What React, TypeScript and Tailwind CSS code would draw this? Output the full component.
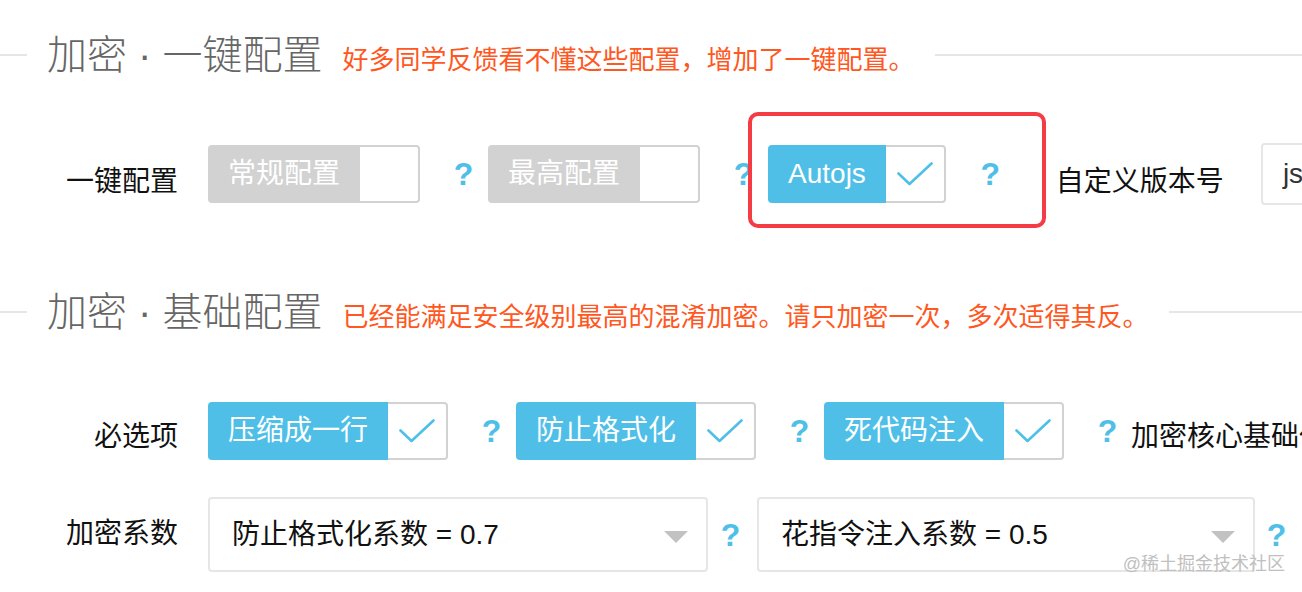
import React from "react";

const Check = () => (
  <svg width="36" height="24" viewBox="0 0 36 24" fill="none">
    <polyline points="1.5,11.5 12.5,22 34.5,1.5" stroke="#4fbfe8" strokeWidth="2.6" strokeLinecap="round" strokeLinejoin="round" />
  </svg>
);

function Box({ text, checked }: { text: string; checked: boolean }) {
  return (
    <div className="flex h-[58px] mt-[2px] shrink-0">
      <span
        className={
          checked
            ? "flex items-center px-[20px] rounded-l-[4px] bg-[#4fbfe8] text-white text-[28px] leading-none whitespace-nowrap"
            : "flex items-center px-[20px] rounded-l-[4px] bg-[#d2d2d2] text-white text-[28px] leading-none whitespace-nowrap"
        }
      >
        {text}
      </span>
      <span className="w-[60px] border-2 border-l-0 border-[#d2d2d2] rounded-r-[4px] bg-white flex items-center justify-center">
        {checked && <Check />}
      </span>
    </div>
  );
}

function Q({ h = "h-[58px] mt-[2px]", cls = "" }: { h?: string; cls?: string }) {
  return (
    <div className={`${h} ${cls} w-[17px] shrink-0 flex items-center justify-center text-[32px] font-bold leading-none text-[#4fbfe8]`}>
      ?
    </div>
  );
}

function Header({ title, sub, cls }: { title: string; sub: string; cls: string }) {
  return (
    <div className={`flex items-center h-[40px] ${cls}`}>
      <div className="w-[27px] h-[2px] bg-[#e6e6e6] shrink-0" />
      <div className="flex items-baseline px-[20px] shrink-0 whitespace-nowrap">
        <span className="text-[40px] leading-none text-[#666666] font-light">{title}</span>
        <span className="ml-[20px] text-[26px] leading-none text-[#ff5722]">{sub}</span>
      </div>
      <div className="flex-1 h-[2px] bg-[#e6e6e6]" />
    </div>
  );
}

function Select({ text, w }: { text: string; w: string }) {
  return (
    <div className={`relative ${w} h-[75px] shrink-0 border-2 border-[#e6e6e6] rounded-[4px] bg-white flex items-center pl-[22px] text-[28px] leading-none text-[#111111] whitespace-nowrap`}>
      {text}
      <span className="absolute right-[18px] top-[32px] w-0 h-0 border-l-[12px] border-r-[12px] border-t-[12px] border-l-transparent border-r-transparent border-t-[#c2c2c2]" />
    </div>
  );
}

export default function App() {
  return (
    <div className="relative w-[1302px] h-[592px] overflow-hidden bg-white pt-[35px] font-['Liberation_Sans','Noto_Sans_CJK_SC',sans-serif]">
      <Header title="加密 · 一键配置" sub="好多同学反馈看不懂这些配置，增加了一键配置。" cls="" />

      {/* Row 1 */}
      <div className="flex items-start mt-[68px] h-[62px]">
        <div className="w-[208px] shrink-0 pr-[30px] pt-[19px] text-right text-[28px] leading-[40px] text-[#111111] whitespace-nowrap">
          一键配置
        </div>
        <Box text="常规配置" checked={false} />
        <Q cls="ml-[35px] mr-[16px]" />
        <Box text="最高配置" checked={false} />
        <Q cls="ml-[35px] mr-[16px]" />
        <Box text="Autojs" checked={true} />
        <Q cls="ml-[36px]" />
        <div className="ml-[57px] mr-[37px] shrink-0 pt-[19px] text-[28px] leading-[40px] text-[#111111] whitespace-nowrap">
          自定义版本号
        </div>
        <div className="w-[400px] h-[62px] shrink-0 border-2 border-[#e6e6e6] rounded-[4px] flex items-center pl-[20px] text-[28px] leading-none text-[#333333] whitespace-nowrap">
          jsjiami.com.v7
        </div>
      </div>

      <Header title="加密 · 基础配置" sub="已经能满足安全级别最高的混淆加密。请只加密一次，多次适得其反。" cls="mt-[87px]" />

      {/* Row 2 */}
      <div className="flex items-start mt-[68px] h-[60px]">
        <div className="w-[208px] shrink-0 pr-[30px] pt-[17px] text-right text-[28px] leading-[40px] text-[#111111] whitespace-nowrap">
          必选项
        </div>
        <Box text="压缩成一行" checked={true} />
        <Q cls="ml-[35px] mr-[16px]" />
        <Box text="防止格式化" checked={true} />
        <Q cls="ml-[35px] mr-[16px]" />
        <Box text="死代码注入" checked={true} />
        <Q cls="ml-[35px]" />
        <div className="ml-[15px] shrink-0 pt-[17px] text-[28px] leading-[40px] text-[#111111] whitespace-nowrap">
          加密核心基础代码，不可取消
        </div>
      </div>

      {/* Row 3 */}
      <div className="flex items-start mt-[37px]">
        <div className="w-[208px] shrink-0 pr-[30px] pt-[17px] text-right text-[28px] leading-[40px] text-[#111111] whitespace-nowrap">
          加密系数
        </div>
        <Select text="防止格式化系数 = 0.7" w="w-[500px]" />
        <Q h="h-[75px]" cls="ml-[14px] mr-[18px]" />
        <Select text="花指令注入系数 = 0.5" w="w-[498px]" />
        <Q h="h-[75px]" cls="ml-[13px]" />
      </div>

      {/* annotation */}
      <div className="absolute left-[748px] top-[112px] w-[298px] h-[116px] border-4 border-[#f53c45] rounded-[10px]" />

      {/* watermark */}
      <div className="absolute right-[17px] bottom-[19px] text-[18px] leading-none text-[#c0c0c0] whitespace-nowrap">
        @稀土掘金技术社区
      </div>
    </div>
  );
}
